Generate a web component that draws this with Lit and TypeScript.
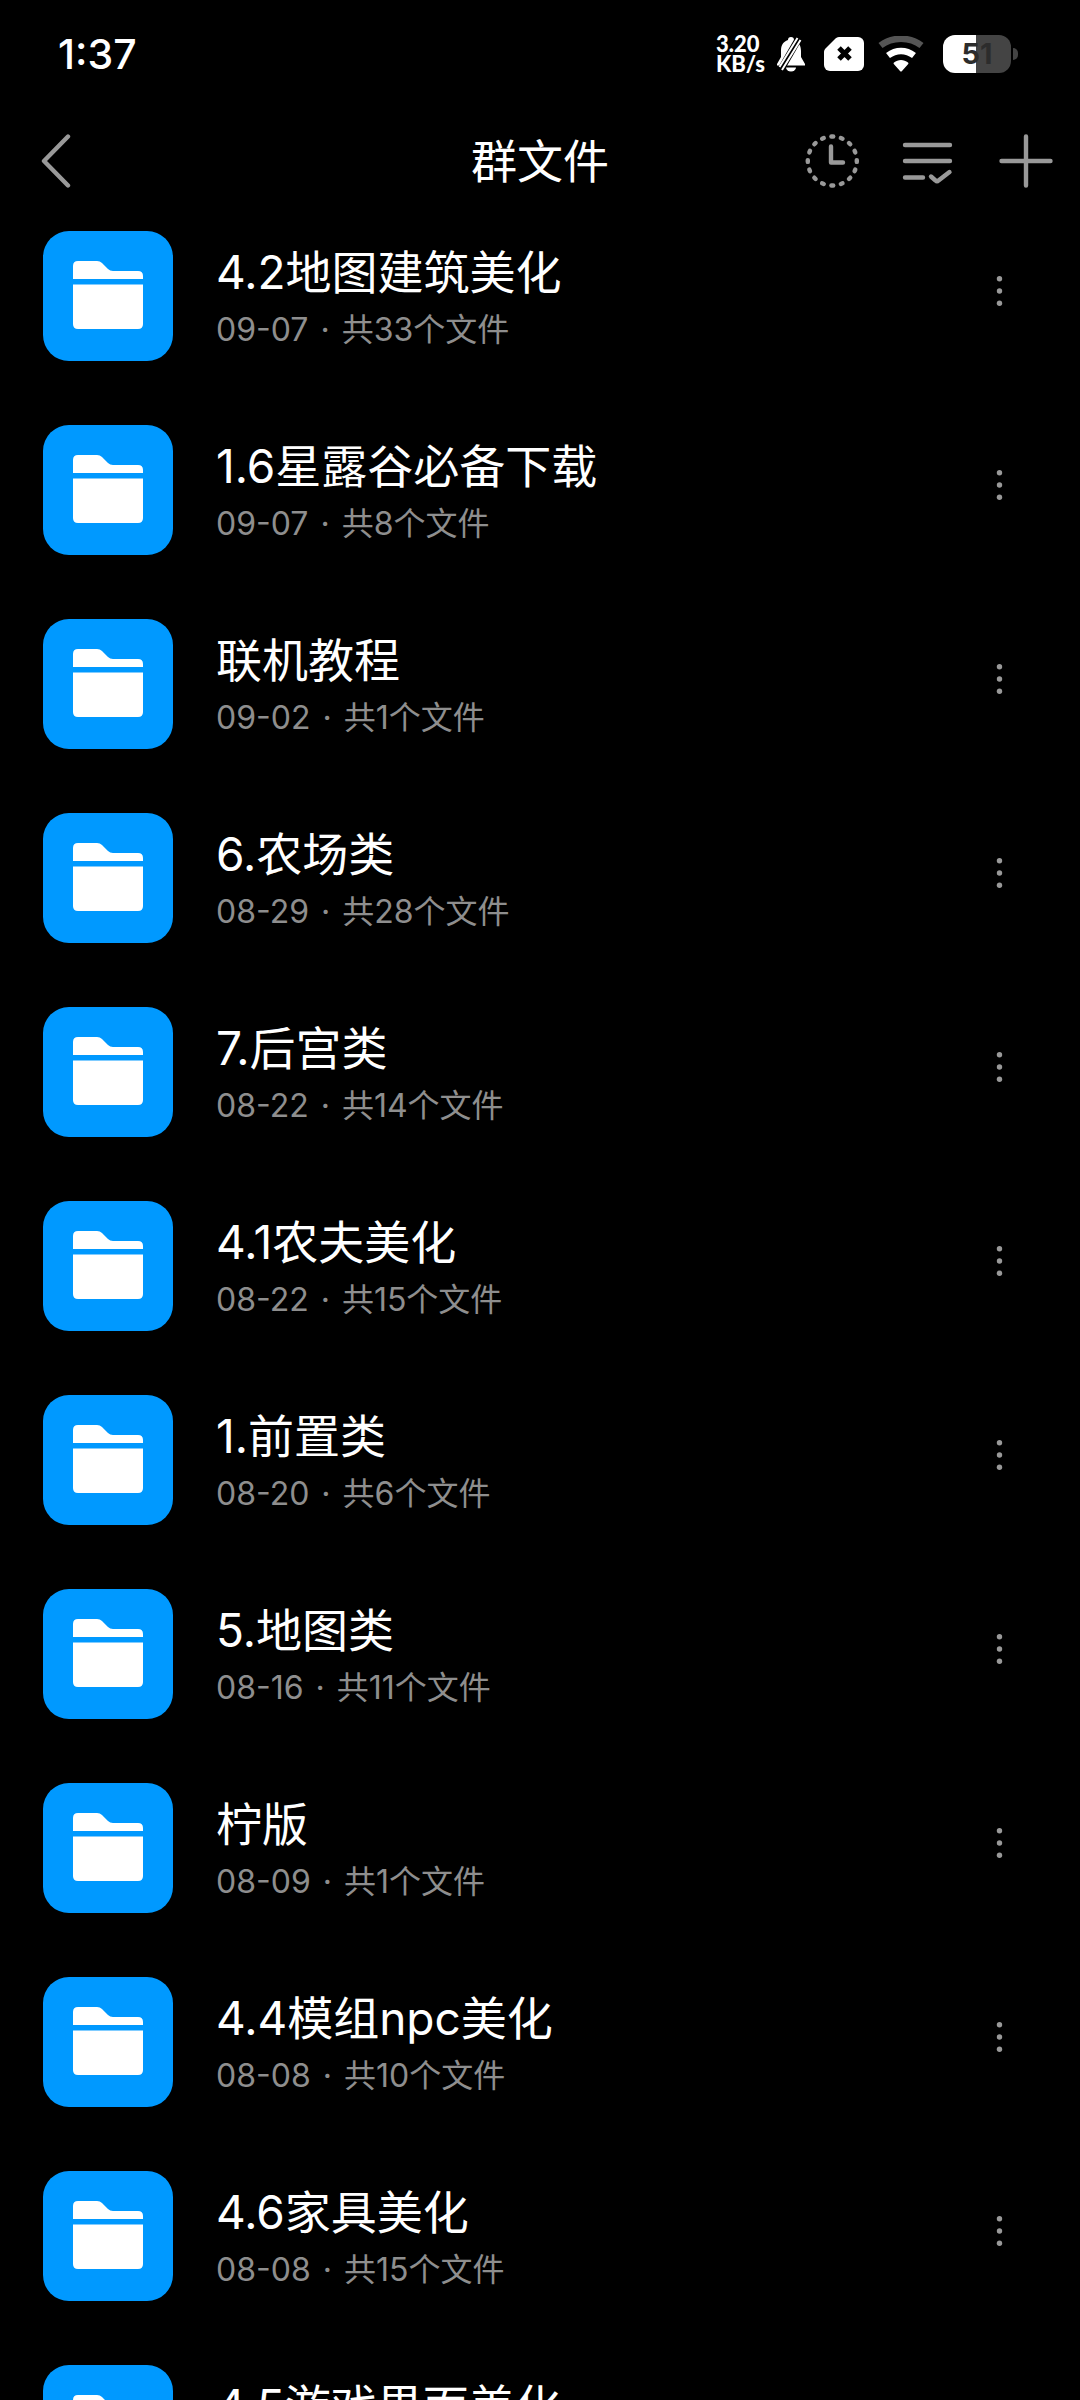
import { LitElement, html, css, svg } from "lit";
import { customElement, property } from "lit/decorators.js";

interface Folder {
  name: string;
  date: string;
  count: number;
}

const FOLDERS: Folder[] = [
  { name: "4.2地图建筑美化", date: "09-07", count: 33 },
  { name: "1.6星露谷必备下载", date: "09-07", count: 8 },
  { name: "联机教程", date: "09-02", count: 1 },
  { name: "6.农场类", date: "08-29", count: 28 },
  { name: "7.后宫类", date: "08-22", count: 14 },
  { name: "4.1农夫美化", date: "08-22", count: 15 },
  { name: "1.前置类", date: "08-20", count: 6 },
  { name: "5.地图类", date: "08-16", count: 11 },
  { name: "柠版", date: "08-09", count: 1 },
  { name: "4.4模组npc美化", date: "08-08", count: 10 },
  { name: "4.6家具美化", date: "08-08", count: 15 },
  { name: "4.5游戏界面美化", date: "08-08", count: 12 },
];

@customElement("status-bar")
export class StatusBar extends LitElement {
  static styles = css`
    :host {
      display: flex;
      align-items: center;
      justify-content: space-between;
      height: 108px;
      padding: 0 62px 0 58px;
      box-sizing: border-box;
      color: #fff;
    }
    .time {
      font: 500 41px/48px Inter, sans-serif;
    }
    .icons {
      display: flex;
      align-items: center;
    }
    .speed {
      display: grid;
      font: 900 22px/20px Lato, sans-serif;
      margin-right: 12px;
    }
    svg {
      display: block;
    }
    .bell {
      margin-right: 19px;
    }
    .sim {
      margin-right: 14px;
    }
    .wifi {
      margin-right: 19px;
    }
    .battery {
      display: flex;
      align-items: center;
      gap: 2px;
    }
    .cell {
      display: flex;
      align-items: center;
      justify-content: center;
      width: 68px;
      height: 38px;
      border-radius: 12px;
      background: linear-gradient(to right, #fff 48%, #444 48%);
      color: #2c2c2c;
      font: 700 29px/38px Inter, sans-serif;
    }
    .nub {
      width: 5px;
      height: 12px;
      border-radius: 0 6px 6px 0;
      background: #444;
    }
  `;

  render() {
    return html`
      <span class="time">1:37</span>
      <div class="icons">
        <span class="speed"><span>3.20</span><span>KB/s</span></span>
        <svg class="bell" width="28" height="36" viewBox="0 0 28 36" aria-hidden="true">
          <path fill="#fff" d="M11 4a3 3 0 0 1 6 0c5 2 7 6 7 11v6l4 7v1.500H0V28l4-7v-6C4 9 6 6 11 4Z" />
          <path fill="#fff" d="M9 31.500h10a5 4 0 0 1-10 0Z" />
          <path stroke="#000" stroke-width="7" d="M22 2 3 35" />
          <path stroke="#fff" stroke-width="2" d="M20.500 2 2.500 31M23.500 4 5 34" />
        </svg>
        <svg class="sim" width="40" height="34" viewBox="0 0 40 34" aria-hidden="true">
          <path fill="#fff" d="M15 0h19a6 6 0 0 1 6 6v22a6 6 0 0 1-6 6H6a6 6 0 0 1-6-6V15c0-2 1-3 2-4L11 2c1-1 2-2 4-2Z" />
          <path stroke="#000" stroke-width="5" d="m15 11 11 11M26 11 15 22" />
        </svg>
        <svg class="wifi" width="46" height="36" viewBox="0 0 46 36" aria-hidden="true">
          <path fill="none" stroke="#555" stroke-width="6.500" d="M2.500 9.500C14 .5 32 .5 43.500 9.500" />
          <path fill="none" stroke="#fff" stroke-width="6.500" d="M10 19.500c8-6 18-6 26 0" />
          <path fill="#fff" d="M16 26.500c4-3.500 10-3.500 14 0 .6.600.6 1.200 0 1.800l-6 6.700c-.6.700-1.400.700-2 0l-6-6.700c-.6-.6-.6-1.200 0-1.800Z" />
        </svg>
        <div class="battery"><span class="cell">51</span><span class="nub"></span></div>
      </div>
    `;
  }
}

@customElement("page-header")
export class PageHeader extends LitElement {
  static styles = css`
    :host {
      display: grid;
      grid-template-columns: 1fr auto 1fr;
      align-items: center;
      height: 106px;
      padding: 0 27px;
      box-sizing: border-box;
      color: #fff;
    }
    h1 {
      margin: 0;
      font: 400 46px/56px Inter, "Noto Sans CJK SC", sans-serif;
    }
    button {
      display: block;
      padding: 0;
      border: 0;
      background: none;
    }
    svg {
      display: block;
      fill: none;
      stroke: #999;
      stroke-width: 4.400;
      stroke-linecap: round;
      stroke-linejoin: round;
    }
    .tools {
      display: flex;
      justify-content: flex-end;
      gap: 43px;
    }
  `;

  render() {
    const ticks = Array.from({ length: 16 }, (_, i) => i * 22.5);
    return html`
      <button aria-label="返回">
        <svg width="54" height="54" viewBox="0 0 54 54">
          <path d="M41 2.500 17 27l24 24.500" />
        </svg>
      </button>
      <h1>群文件</h1>
      <div class="tools">
        <button aria-label="历史">
          <svg width="54" height="54" viewBox="0 0 54 54">
            ${ticks.map((a) => svg`<path d="M26.400 2.500h1.800" transform="rotate(${a} 27.300 27)" />`)}
            <path d="M26 12.500V28.500H38" />
          </svg>
        </button>
        <button aria-label="多选">
          <svg width="54" height="54" viewBox="0 0 54 54">
            <path d="M3 11h45M3 27h45M3 43.500h18M29 42.500l4.500 4q1.500 1.500 3 0L47.500 38" />
          </svg>
        </button>
        <button aria-label="添加">
          <svg width="54" height="54" viewBox="0 0 54 54">
            <path d="M2.500 27h49M27 2.500v49" />
          </svg>
        </button>
      </div>
    `;
  }
}

@customElement("folder-row")
export class FolderRow extends LitElement {
  static styles = css`
    :host {
      display: flex;
      align-items: center;
      padding: 0 48px 0 43px;
    }
    .tile {
      flex: none;
      width: 130px;
      height: 130px;
      border-radius: 26px;
      background: #0099ff;
    }
    .text {
      flex: 1;
      min-width: 0;
      display: flex;
      flex-direction: column;
      gap: 10px;
      margin-left: 43px;
      padding-top: 2px;
      font-family: Inter, "Noto Sans CJK SC", sans-serif;
    }
    .name {
      color: #fff;
      font-size: 46px;
      line-height: 56px;
      white-space: nowrap;
    }
    .meta {
      display: flex;
      gap: 12px;
      color: #8e8e8e;
      font-size: 32px;
      line-height: 40px;
    }
    .more {
      align-self: flex-start;
      display: flex;
      align-items: center;
      justify-content: center;
      width: 64px;
      height: 120px;
      padding: 0;
      border: 0;
      background: none;
    }
  `;

  @property({ attribute: false }) folder!: Folder;

  render() {
    const { name, date, count } = this.folder;
    return html`
      <svg class="tile" viewBox="0 0 130 130" aria-hidden="true">
        <path fill="#fff" d="M30 48V35q0-5 5-5h19q3 0 5 2l6 6q2 2 5 2h25q5 0 5 5v3Z" />
        <path fill="#fff" d="M30 53.500h70V93q0 5-5 5H35q-5 0-5-5Z" />
      </svg>
      <div class="text">
        <span class="name">${name}</span>
        <span class="meta"><span>${date}</span><span>·</span><span>共${count}个文件</span></span>
      </div>
      <button class="more" aria-label="更多">
        <svg width="8" height="32" viewBox="0 0 8 32" fill="#999">
          <circle cx="3.500" cy="3.700" r="2.700" />
          <circle cx="3.500" cy="16" r="2.700" />
          <circle cx="3.500" cy="28.300" r="2.700" />
        </svg>
      </button>
    `;
  }
}

@customElement("app-root")
export class AppRoot extends LitElement {
  static styles = css`
    :host {
      display: flex;
      flex-direction: column;
      height: 100vh;
      background: #000;
    }
    status-bar,
    page-header {
      flex: none;
    }
    .list {
      flex: 1;
      min-height: 0;
      display: flex;
      flex-direction: column;
      gap: 64px;
      margin: 0;
      padding: 17px 0 0;
      list-style: none;
      overflow-y: auto;
      scrollbar-width: none;
    }
  `;

  render() {
    return html`
      <status-bar></status-bar>
      <page-header></page-header>
      <ul class="list">
        ${FOLDERS.map((f) => html`<li><folder-row .folder=${f}></folder-row></li>`)}
      </ul>
    `;
  }
}
